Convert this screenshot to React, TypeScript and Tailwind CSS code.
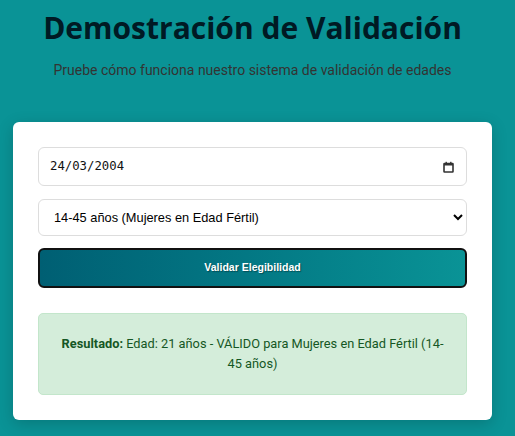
import React from "react";

const CalendarIcon = () => (
  <svg width="11" height="12" viewBox="0 0 11 12" fill="none">
    <rect x="1" y="2.5" width="9" height="8.5" rx="0.5" stroke="#333" strokeWidth="1.6" />
    <rect x="1" y="2.5" width="9" height="2" fill="#333" />
    <rect x="2.5" y="0.8" width="1.4" height="2" fill="#333" />
    <rect x="7.1" y="0.8" width="1.4" height="2" fill="#333" />
  </svg>
);

export default function App() {
  return (
    <div className="min-h-[436px] w-full bg-[#0a9396] pt-[8px] pb-[17px]">
      <div className="w-[505px] px-[13px]">
        <h1 className="text-center font-['Open_Sans',sans-serif] text-[30px] font-bold leading-[40px] text-[#001a24]">
          Demostración de Validación
        </h1>
        <p className="mt-[12px] text-center font-['Roboto',sans-serif] text-[14px] leading-[20px] text-[#333]">
          Pruebe cómo funciona nuestro sistema de validación de edades
        </p>

        <div className="mt-[42px] rounded-[6px] bg-white p-[25px] shadow-[0_4px_16px_rgba(0,0,0,0.18)]">
          <div className="flex h-[39px] items-center justify-between rounded-[6px] border border-[#ddd] pr-[12px] pl-[11px]">
            <span className="font-['DejaVu_Sans_Mono',monospace] text-[12.3px] text-[#111]">24/03/2004</span>
            <CalendarIcon />
          </div>

          <select
            defaultValue="fertil"
            className="mt-[13px] block h-[37px] w-full rounded-[6px] border border-[#ddd] bg-white pl-[11px] pr-[4px] font-['Liberation_Sans',Arial,sans-serif] text-[12.8px] text-black"
          >
            <option value="fertil">14-45 años (Mujeres en Edad Fértil)</option>
            <option value="ninos">0-5 años (Niños)</option>
          </select>

          <button className="mt-[12px] flex h-[40px] w-full items-center justify-center rounded-[6px] border-2 border-[#111] bg-gradient-to-r from-[#005f73] to-[#0a9396] font-['Liberation_Sans',Arial,sans-serif] text-[10.5px] font-bold text-white [text-shadow:1px_1px_1px_rgba(0,0,0,0.35)]">
            Validar Elegibilidad
          </button>

          <div className="mt-[25px] rounded-[5px] border border-[#c3e6cb] bg-[#d4edda] px-[18px] py-[20px] text-center font-['Roboto',sans-serif] text-[12.8px] leading-[20px] text-[#155724]">
            <strong>Resultado:</strong> Edad: 21 años - VÁLIDO para Mujeres en Edad Fértil (14-45 años)
          </div>
        </div>
      </div>
    </div>
  );
}
